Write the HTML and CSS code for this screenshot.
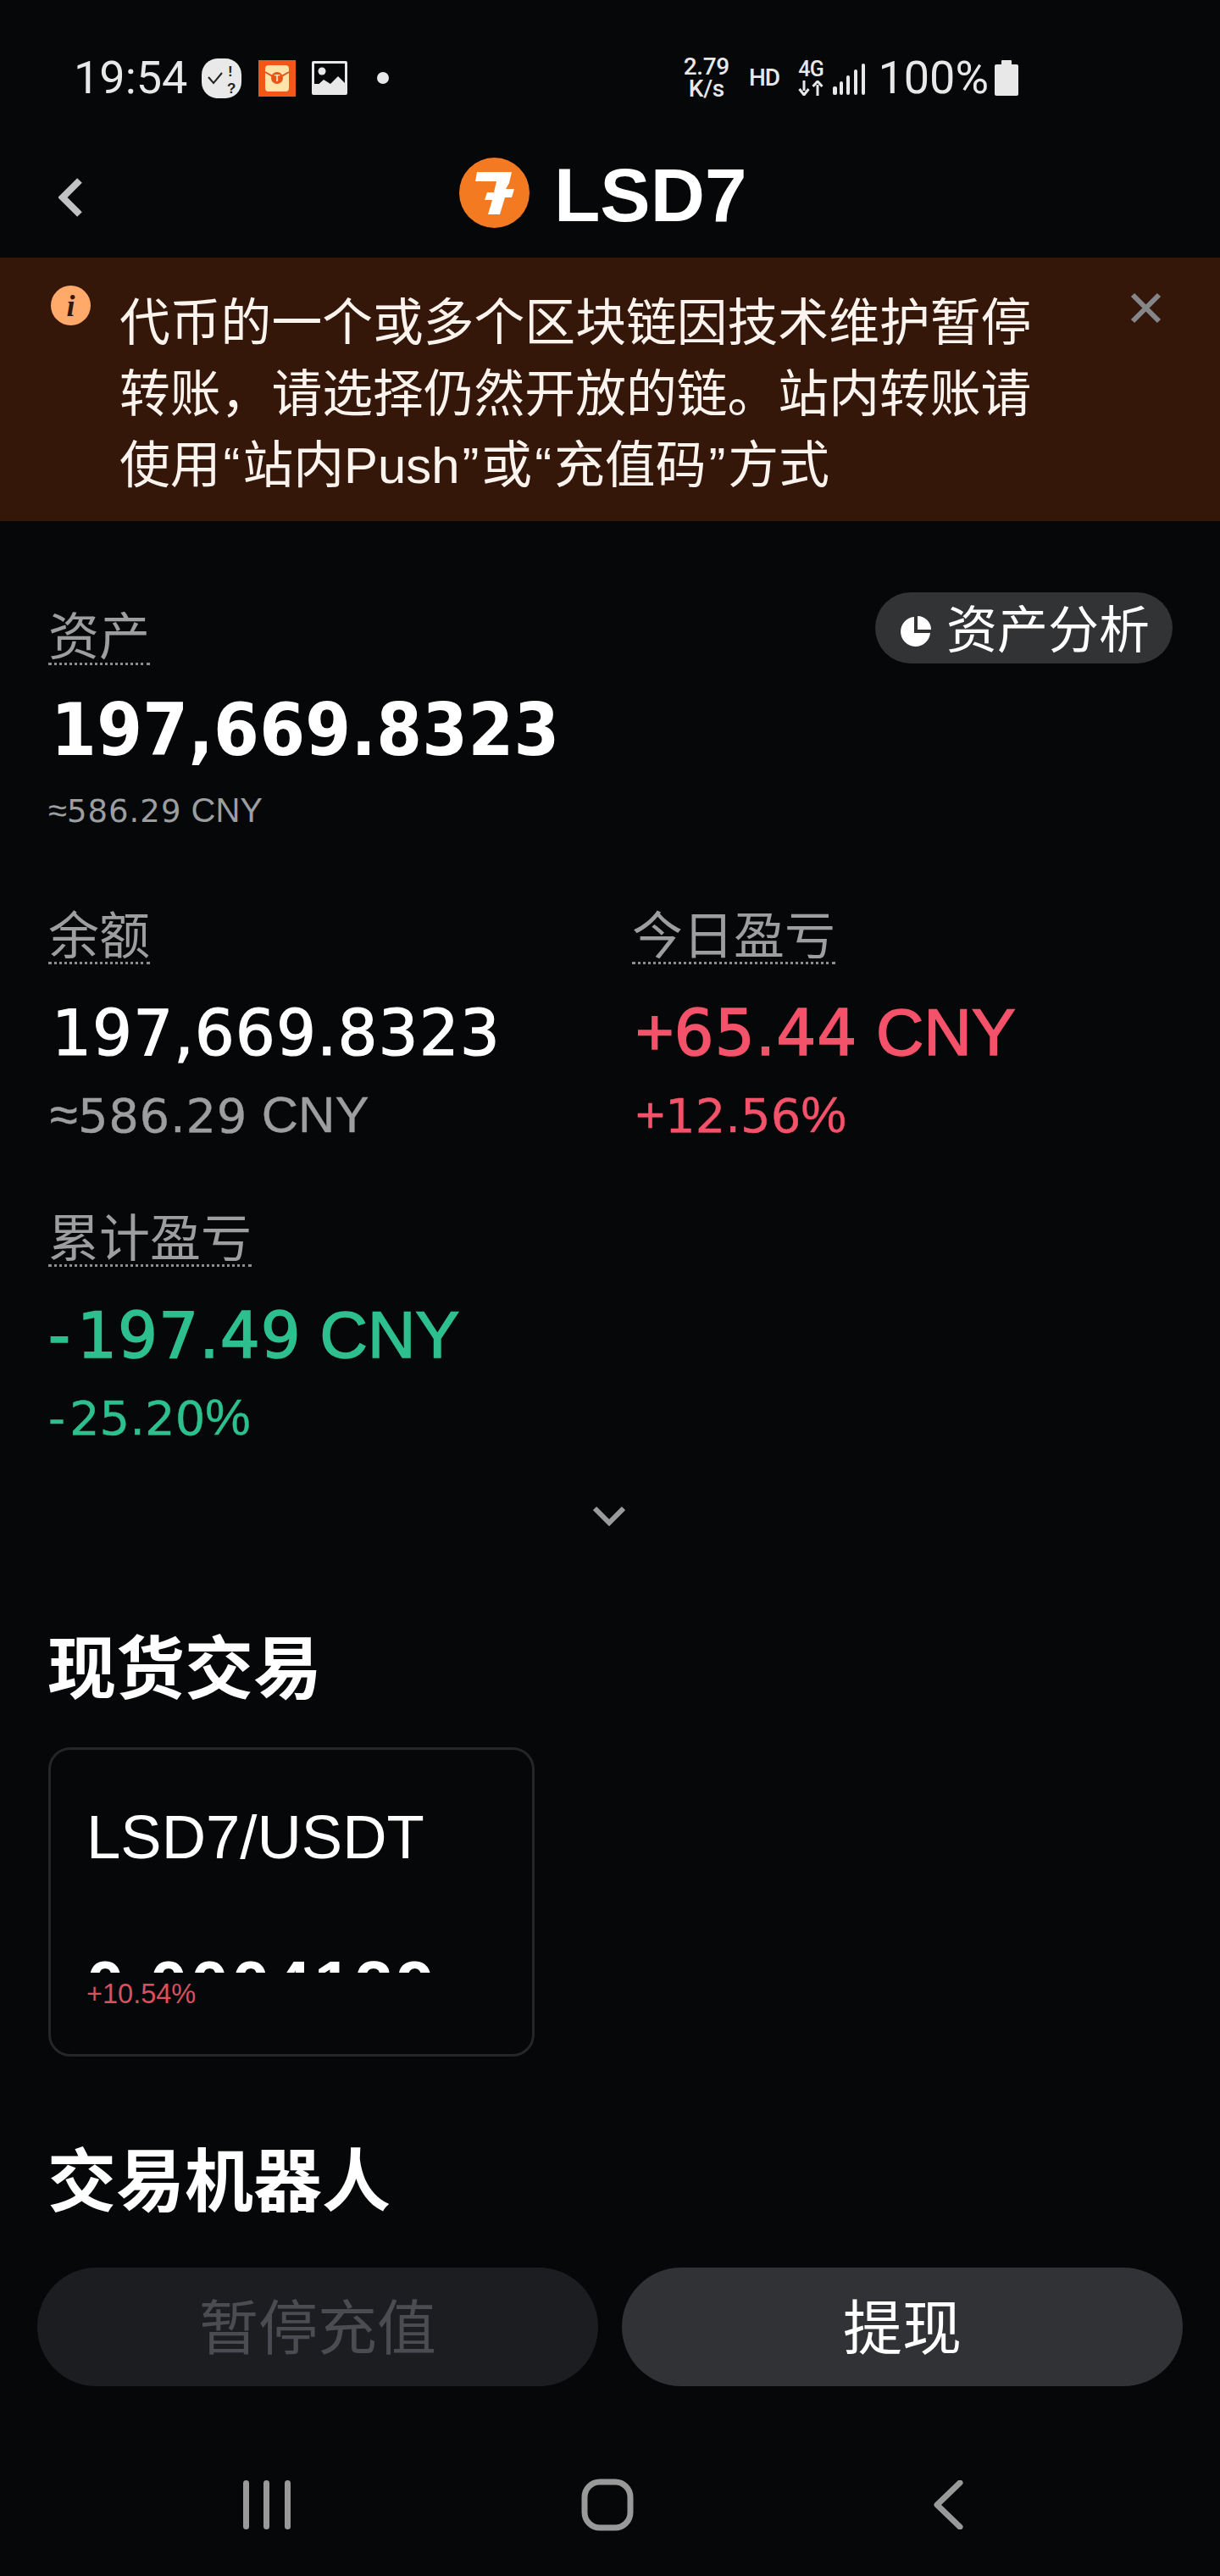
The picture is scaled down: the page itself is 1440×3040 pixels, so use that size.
FILE: index.html
```html
<!DOCTYPE html>
<html lang="zh-CN">
<head>
<meta charset="utf-8">
<title>LSD7</title>
<link rel="stylesheet" href="styles.css">
</head>
<body>
<div class="page">
  <div class="status">
    <div class="status-left">
      <span class="clock">19:54</span>
      <svg class="ic-todo" viewBox="0 0 47 47"><rect width="47" height="47" rx="19" fill="#e9e9e9"/><path d="M8 22l6 7 10-12" fill="none" stroke="#222" stroke-width="2"/><text x="31" y="21" class="ic-mark">!</text><text x="30" y="41" class="ic-mark">?</text></svg>
      <svg class="ic-red" viewBox="0 0 44 43"><rect width="44" height="43" fill="#f4561a"/><rect x="8" y="6" width="28" height="31" rx="4" fill="#ffe3a8"/><path d="M8 14l14 8 14-8" fill="none" stroke="#e2521b" stroke-width="2"/><circle cx="22" cy="21" r="7" fill="#e8541a"/><text x="22" y="25" class="ic-t">T</text></svg>
      <svg class="ic-image" viewBox="0 0 42 40"><path d="M2 0h38a2 2 0 0 1 2 2v36a2 2 0 0 1-2 2H2a2 2 0 0 1-2-2V2a2 2 0 0 1 2-2z" fill="#e8e8e8"/><rect x="3" y="3" width="36" height="24" fill="#050708"/><circle cx="12" cy="12" r="4.500" fill="#e8e8e8"/><path d="M3 32l11-10 8 5 9-9 8 8v12H3z" fill="#e8e8e8"/></svg>
      <span class="dot"></span>
    </div>
    <div class="status-right">
      <div class="net"><span>2.79</span><span>K/s</span></div>
      <span class="hd">HD</span>
      <div class="lte">
        <span>4G</span>
        <svg class="ic-arrows" viewBox="0 0 30 18"><path d="M7 0v12M1.500 10L7 17l5.500-7" fill="none" stroke="#e8e8e8" stroke-width="3"/><path d="M23 18V5M17.500 7L23 1l5.500 6" fill="none" stroke="#e8e8e8" stroke-width="3"/></svg>
      </div>
      <svg class="ic-signal" viewBox="0 0 38 37"><g fill="#e8e8e8"><rect x="0" y="27" width="5" height="10" rx="2"/><rect x="8" y="21" width="4" height="16" rx="2"/><rect x="16" y="14" width="4" height="23" rx="2"/><rect x="25" y="7" width="4" height="30" rx="2"/><rect x="34" y="0" width="4" height="37" rx="2"/></g></svg>
      <span class="pct">100%</span>
      <svg class="ic-battery" viewBox="0 0 28 42"><path d="M9 0h10a1 1 0 0 1 1 1v4h6a2 2 0 0 1 2 2v33a2 2 0 0 1-2 2H2a2 2 0 0 1-2-2V7a2 2 0 0 1 2-2h6V1a1 1 0 0 1 1-1z" fill="#e8e8e8"/></svg>
    </div>
  </div>

  <header class="topbar">
    <svg class="ic-back" viewBox="0 0 29 46"><path d="M25 3L5 23l20 20" fill="none" stroke="#c0c2c4" stroke-width="8"/></svg>
    <svg class="logo" viewBox="0 0 83 83"><circle cx="41.500" cy="41.500" r="41.500" fill="#f47a22"/><path d="M21 17H62L59 30L55 37H65L62 47H54L48 67H34L39 50H30L33 41H41L44 28H19Z" fill="#fff"/></svg>
    <h1 class="title">LSD7</h1>
  </header>

  <section class="notice">
    <svg class="ic-info" viewBox="0 0 47 47"><circle cx="23.500" cy="23.500" r="23.500" fill="#ffa96b"/><text x="23.500" y="36" class="ic-i">i</text></svg>
    <p class="notice-text">代币的一个或多个区块链因技术维护暂停转账，请选择仍然开放的链。站内转账请使用<span class="q">“</span>站内Push<span class="q">”</span>或<span class="q">“</span>充值码<span class="q">”</span>方式</p>
    <svg class="ic-close" viewBox="0 0 37 37"><path d="M3 3l31 31M34 3L3 34" fill="none" stroke="#85868a" stroke-width="6"/></svg>
  </section>

  <main class="content">
    <div class="asset-head">
      <span class="label">资产</span>
      <button class="analysis">
        <svg class="ic-pie" viewBox="0 0 36 36"><path d="M16 1a17.500 17.500 0 1 0 19 19H16z" fill="#fff"/><path d="M20 0a16 16 0 0 1 16 16H20z" fill="#fff"/></svg>
        资产分析
      </button>
    </div>
    <div class="big-value">197,669.8323</div>
    <div class="big-sub">≈<span class="digits">586.29</span> CNY</div>

    <div class="stats">
      <div class="stat">
        <span class="label">余额</span>
        <div class="value plain"><span class="digits">197,669.8323</span></div>
        <div class="sub muted">≈<span class="digits">586.29</span> CNY</div>
      </div>
      <div class="stat">
        <span class="label">今日盈亏</span>
        <div class="value up">+<span class="digits">65.44</span> CNY</div>
        <div class="sub up">+<span class="digits">12.56</span>%</div>
      </div>
      <div class="stat">
        <span class="label">累计盈亏</span>
        <div class="value down">-<span class="digits">197.49</span> CNY</div>
        <div class="sub down">-<span class="digits">25.20</span>%</div>
      </div>
    </div>

    <div class="expand">
      <svg class="ic-chevron" viewBox="0 0 38 24"><path d="M2 3l17 17L36 3" fill="none" stroke="#9a9a9a" stroke-width="6"/></svg>
    </div>

    <h2 class="heading spot-heading">现货交易</h2>
    <div class="pair-card">
      <div class="pair-name">LSD7/USDT</div>
      <div class="pair-price"><span>0.0004139</span></div>
      <div class="pair-change">+10.54%</div>
    </div>
    <h2 class="heading bot-heading">交易机器人</h2>
  </main>

  <div class="actions">
    <button class="action disabled">暂停充值</button>
    <button class="action">提现</button>
  </div>

  <nav class="navbar">
    <svg class="nav-recent" viewBox="0 0 56 58"><g fill="#999"><rect x="0" y="0" width="7" height="58" rx="3.500"/><rect x="24" y="0" width="7" height="58" rx="3.500"/><rect x="49" y="0" width="7" height="58" rx="3.500"/></g></svg>
    <svg class="nav-home" viewBox="0 0 62 62"><rect x="4" y="4" width="54" height="54" rx="18" fill="none" stroke="#999" stroke-width="7"/></svg>
    <svg class="nav-back" viewBox="0 0 36 58"><path d="M32 3L5 29l27 26" fill="none" stroke="#999" stroke-width="7" stroke-linecap="round" stroke-linejoin="round"/></svg>
  </nav>
</div>
</body>
</html>
```
FILE: styles.css
```css
* { box-sizing: border-box; }
html, body { margin: 0; padding: 0; background: #050708; }
body {
  font-family: "Liberation Sans", "Noto Sans CJK SC", sans-serif;
  color: #fff;
}
.page { width: 1440px; height: 3040px; overflow: hidden; background: #050708; }

/* status bar */
.status {
  height: 150px;
  padding: 64px 238px 0 87px;
  display: flex;
  justify-content: space-between;
  align-items: flex-start;
  color: #e8e8e8;
  font-family: Roboto, sans-serif;
}
.status-left, .status-right { display: flex; align-items: center; height: 56px; }
.clock { font-size: 54px; font-weight: 400; line-height: 56px; margin-right: 17px; }
.ic-todo { width: 47px; height: 47px; margin-right: 20px; }
.ic-red { width: 44px; height: 43px; margin-right: 19px; }
.ic-image { width: 42px; height: 40px; margin-right: 35px; }
.dot { width: 14px; height: 14px; border-radius: 50%; background: #e8e8e8; }
.ic-mark { font: 700 17px "Liberation Sans", sans-serif; fill: #222; }
.ic-t { font: 700 11px "Liberation Sans", sans-serif; fill: #ffe3a8; text-anchor: middle; }
.net {
  display: flex;
  flex-direction: column;
  align-items: center;
  font-size: 28px;
  font-weight: 500;
  line-height: 26px;
  margin-right: 23px;
  letter-spacing: -0.3px;
}
.hd { font-size: 28px; font-weight: 500; line-height: 28px; margin-right: 22px; letter-spacing: -1px; }
.lte {
  display: flex;
  flex-direction: column;
  align-items: center;
  font-size: 25px;
  font-weight: 500;
  line-height: 22px;
  margin-right: 11px;
  letter-spacing: -0.5px;
}
.ic-arrows { width: 30px; height: 18px; margin-top: 2px; }
.ic-signal { width: 38px; height: 37px; margin-right: 15px; margin-top: 3px; }
.pct { font-size: 54px; font-weight: 400; line-height: 56px; margin-right: 7px; }
.ic-battery { width: 28px; height: 42px; }

/* title bar */
.topbar { height: 154px; padding-left: 69px; display: flex; align-items: center; }
.ic-back { width: 29px; height: 46px; margin-right: 444px; margin-top: 12px; }
.logo { width: 83px; height: 83px; margin-right: 29px; }
.title { margin: 5px 0 0; font-size: 89px; line-height: 96px; font-weight: 700; }

/* notice */
.notice {
  height: 311px;
  background: #35170a;
  padding: 33px 0 0 60px;
  display: flex;
  align-items: flex-start;
  color: #fbf3ee;
}
.ic-info { width: 47px; height: 47px; margin-right: 34px; flex: none; }
.ic-i { font: italic 700 36px "Liberation Serif", serif; fill: #35170a; text-anchor: middle; }
.notice-text { margin: 3px 0 0; width: 1100px; font-size: 59.800px; line-height: 84px; flex: none; }
.q { padding: 0 3px; }
.ic-close { width: 37px; height: 37px; margin: 8px 0 0 93px; flex: none; }

/* overview */
.content { padding: 84px 56px 0 57px; }
.asset-head { display: flex; justify-content: space-between; align-items: flex-end; height: 86px; }
.label {
  display: inline-block;
  padding-top: 6px;
  font-size: 60px;
  line-height: 58px;
  color: #9c9ea0;
  border-bottom: 3px dotted #8b8d90;
}
.analysis {
  align-self: flex-start;
  height: 84px;
  border: 0;
  border-radius: 42px;
  background: #323335;
  color: #fff;
  font: 400 60px/72px "Liberation Sans", "Noto Sans CJK SC", sans-serif;
  padding: 8px 27px 0 30px;
  display: flex;
  align-items: center;
}
.ic-pie { width: 36px; height: 36px; margin-right: 18px; }
.digits { font-family: "DejaVu Sans", sans-serif; }
.big-value {
  margin: 28px 0 0 3px;
  font-family: "DejaVu Sans", sans-serif;
  font-stretch: condensed;
  font-size: 86px;
  line-height: 96px;
  font-weight: 700;
  letter-spacing: 0.300px;
}
.big-sub { margin-top: 22px; height: 50px; font-size: 40px; line-height: 50px; color: #9c9ea0; }
.big-sub .digits { font-size: 37px; letter-spacing: 1px; }
.stats { margin-top: 90px; display: grid; grid-template-columns: 689px 1fr; row-gap: 82px; }
.value {
  margin-top: 36px;
  height: 88px;
  font-size: 78px;
  line-height: 88px;
  -webkit-text-stroke: 1.600px currentColor;
  white-space: nowrap;
}
.value .digits { font-size: 74px; letter-spacing: 1px; }
.value.plain { margin-left: 4px; -webkit-text-stroke-width: 1.200px; }
.value.up { margin-left: 4px; }
.value.down .digits { margin-left: 8px; }
.sub { margin-top: 24px; height: 60px; font-size: 60px; line-height: 60px; -webkit-text-stroke: 0.400px currentColor; }
.sub .digits { font-size: 56px; }
.muted { color: #9c9ea0; margin-left: 2px; }
.muted .digits { letter-spacing: 0.700px; }
.sub.up { margin-left: 4px; }
.sub.down .digits { margin-left: 5px; }
.up { color: #f4526a; }
.down { color: #2dc08e; }
.expand { margin-top: 74px; display: flex; justify-content: center; }
.ic-chevron { width: 38px; height: 24px; margin-left: -3px; }
.heading { margin: 0 0 0 -1px; font-size: 81px; line-height: 96px; font-weight: 700; }
.spot-heading { margin-top: 121px; }
.bot-heading { margin-top: 100px; }
.pair-card {
  margin-top: 44px;
  width: 574px;
  height: 365px;
  border: 3px solid #242628;
  border-radius: 26px;
  padding: 63px 0 0 42px;
}
.pair-name { font-size: 72.500px; line-height: 80px; }
.pair-price { margin-top: 87px; height: 33px; overflow: hidden; font-size: 80px; line-height: 96px; font-weight: 700; letter-spacing: 4px; }
.pair-price span { display: block; }
.pair-change { margin-top: 5px; font-size: 32.500px; line-height: 40px; color: #d9505f; }

/* actions */
.actions { margin-top: 53px; padding: 0 44px; display: flex; gap: 28px; }
.action {
  flex: 1;
  height: 140px;
  border: 0;
  border-radius: 70px;
  background: #313235;
  color: #fff;
  font: 400 70px/134px "Liberation Sans", "Noto Sans CJK SC", sans-serif;
  padding: 6px 0 0;
}
.action.disabled { background: #1c1d21; color: #4b4c52; }

/* android nav */
.navbar {
  height: 224px;
  padding: 109px 0 0 114px;
  display: grid;
  grid-template-columns: repeat(3, 402px);
  justify-items: center;
  align-items: start;
}
.nav-recent { width: 56px; height: 58px; margin-top: 2px; }
.nav-home { width: 62px; height: 62px; }
.nav-back { width: 36px; height: 58px; margin-top: 2px; }
```
